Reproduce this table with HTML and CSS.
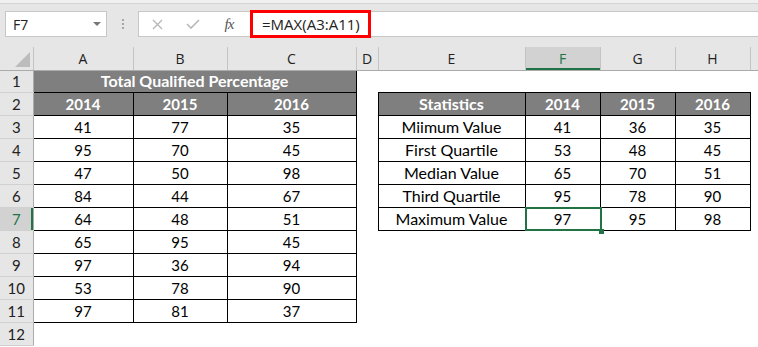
FILE: index.html
```html
<!DOCTYPE html>
<html lang="en">
<head>
    <meta charset="UTF-8">
    <meta name="viewport" content="width=device-width, initial-scale=1.0">
    <title>Quartile Statistics</title>
    <link rel="stylesheet" href="styles.css">
</head>
<body>
    <!-- Formula bar -->
    <div class="ribbon-edge"></div>
    <div class="formula-row">
        <div class="name-box">
            <span>F7</span>
            <span class="caret"></span>
        </div>
        <div class="grip"><i></i><i></i><i></i></div>
        <div class="formula-bar">
            <div class="bar-icons">
                <span class="slot">
                    <svg width="11" height="11" viewBox="0 0 11 11"><path d="M1 1 L10 10 M10 1 L1 10" stroke="#b8b8b8" stroke-width="1.4" fill="none"/></svg>
                </span>
                <span class="slot">
                    <svg width="14" height="10" viewBox="0 0 14 10"><path d="M1 5 L5 9 L13 1" stroke="#b8b8b8" stroke-width="1.6" fill="none"/></svg>
                </span>
                <span class="slot fx">fx</span>
            </div>
            <div class="formula-text">=MAX(A3:A11)</div>
        </div>
    </div>

    <!-- Worksheet -->
    <table class="sheet">
        <colgroup>
            <col class="c-head">
            <col class="c-a">
            <col class="c-b">
            <col class="c-c">
            <col class="c-d">
            <col class="c-e">
            <col class="c-f">
            <col class="c-g">
            <col class="c-h">
            <col>
        </colgroup>
        <tr class="col-letters">
            <th class="corner"><span class="tri"></span></th>
            <th>A</th><th>B</th><th>C</th><th>D</th><th>E</th>
            <th class="active-col">F</th><th>G</th><th>H</th><th class="tail"></th>
        </tr>
        <tr class="r1">
            <th class="row-num">1</th>
            <td class="b hd label" colspan="3">Total Qualified Percentage</td>
            <td></td><td></td><td></td><td></td><td></td><td></td>
        </tr>
        <tr>
            <th class="row-num">2</th>
            <td class="b hd">2014</td><td class="b hd">2015</td><td class="b hd">2016</td>
            <td></td>
            <td class="b hd label">Statistics</td><td class="b hd">2014</td><td class="b hd">2015</td><td class="b hd">2016</td>
            <td></td>
        </tr>
        <tr>
            <th class="row-num">3</th>
            <td class="b">41</td><td class="b">77</td><td class="b">35</td>
            <td></td>
            <td class="b label">Miimum Value</td><td class="b">41</td><td class="b">36</td><td class="b">35</td>
            <td></td>
        </tr>
        <tr>
            <th class="row-num">4</th>
            <td class="b">95</td><td class="b">70</td><td class="b">45</td>
            <td></td>
            <td class="b label">First Quartile</td><td class="b">53</td><td class="b">48</td><td class="b">45</td>
            <td></td>
        </tr>
        <tr>
            <th class="row-num">5</th>
            <td class="b">47</td><td class="b">50</td><td class="b">98</td>
            <td></td>
            <td class="b label">Median Value</td><td class="b">65</td><td class="b">70</td><td class="b">51</td>
            <td></td>
        </tr>
        <tr>
            <th class="row-num">6</th>
            <td class="b">84</td><td class="b">44</td><td class="b">67</td>
            <td></td>
            <td class="b label">Third Quartile</td><td class="b">95</td><td class="b">78</td><td class="b">90</td>
            <td></td>
        </tr>
        <tr>
            <th class="row-num active-row">7</th>
            <td class="b">64</td><td class="b">48</td><td class="b">51</td>
            <td></td>
            <td class="b label">Maximum Value</td><td class="b sel">97</td><td class="b">95</td><td class="b">98</td>
            <td></td>
        </tr>
        <tr>
            <th class="row-num">8</th>
            <td class="b">65</td><td class="b">95</td><td class="b">45</td>
            <td></td><td></td><td></td><td></td><td></td><td></td>
        </tr>
        <tr>
            <th class="row-num">9</th>
            <td class="b">97</td><td class="b">36</td><td class="b">94</td>
            <td></td><td></td><td></td><td></td><td></td><td></td>
        </tr>
        <tr>
            <th class="row-num">10</th>
            <td class="b">53</td><td class="b">78</td><td class="b">90</td>
            <td></td><td></td><td></td><td></td><td></td><td></td>
        </tr>
        <tr>
            <th class="row-num">11</th>
            <td class="b">97</td><td class="b">81</td><td class="b">37</td>
            <td></td><td></td><td></td><td></td><td></td><td></td>
        </tr>
        <tr>
            <th class="row-num">12</th>
            <td></td><td></td><td></td><td></td><td></td><td></td><td></td><td></td><td></td>
        </tr>
    </table>
</body>
</html>
```

FILE: styles.css
```css
/* Reset */
body, table, th, td {
    margin: 0;
    padding: 0;
}

body {
    background-color: #fff;
    font-family: Lato, "Liberation Sans", sans-serif;
    color: #000;
    overflow: hidden;
}

/* Formula bar */
.ribbon-edge {
    height: 3px;
    background-color: #f0f0f0;
    border-bottom: 1px solid #d4d4d4;
}

.formula-row {
    display: flex;
    background-color: #e6e6e6;
    padding: 7px 0 10px 5px;
}

.name-box {
    box-sizing: border-box;
    width: 102px;
    height: 26px;
    background-color: #fff;
    border: 1px solid #c6c6c6;
    display: flex;
    align-items: center;
    justify-content: space-between;
    padding: 0 5px 0 7px;
    font-family: "Open Sans", sans-serif;
    font-size: 14px;
    color: #222;
}

.caret {
    width: 0;
    height: 0;
    border-left: 4px solid transparent;
    border-right: 4px solid transparent;
    border-top: 4px solid #777;
}

.grip {
    width: 31px;
    display: flex;
    flex-direction: column;
    align-items: center;
    justify-content: center;
    gap: 2px;
}

.grip i {
    width: 2px;
    height: 2px;
    background-color: #a6a6a6;
}

.formula-bar {
    flex: 1;
    box-sizing: border-box;
    height: 26px;
    display: flex;
    background-color: #fff;
    border: 1px solid #c6c6c6;
    border-right: none;
}

.bar-icons {
    display: flex;
    width: 108px;
}

.slot {
    width: 36px;
    display: flex;
    align-items: center;
    justify-content: center;
}

.fx {
    font-family: "Liberation Serif", serif;
    font-style: italic;
    font-size: 15px;
    color: #555;
    letter-spacing: -1px;
}

.formula-text {
    box-sizing: border-box;
    height: 28px;
    margin: -2px 0 0 3px;
    padding: 0 8px 0 9px;
    border: 3px solid #f00;
    font-family: "Open Sans", sans-serif;
    font-size: 15px;
    line-height: 22px;
    color: #222;
}

/* Worksheet grid */
.sheet {
    border-collapse: collapse;
    table-layout: fixed;
    width: 758px;
}

.c-head { width: 33px; }
.c-a { width: 100px; }
.c-b { width: 94px; }
.c-c { width: 129px; }
.c-d { width: 22px; }
.c-e { width: 147px; }
.c-f { width: 75px; }
.c-g { width: 75px; }
.c-h { width: 75px; }

.sheet tr {
    height: 23px;
}

.sheet .r1 {
    height: 22px;
}

.sheet td {
    font-size: 15px;
    text-align: center;
    line-height: 20px;
    white-space: nowrap;
}

.sheet td.label {
    font-size: 16px;
}

.col-letters th {
    background-color: #e6e6e6;
    border-right: 1px solid #c4c4c4;
    border-bottom: 1px solid #ababab;
    font-family: "Open Sans", sans-serif;
    font-weight: normal;
    font-size: 14px;
    color: #222;
}

.col-letters .tail {
    border-right: none;
}

.corner {
    position: relative;
}

.tri {
    position: absolute;
    right: 3px;
    bottom: 3px;
    width: 0;
    height: 0;
    border-left: 15px solid transparent;
    border-bottom: 15px solid #bcbcbc;
}

.active-col {
    background-color: #d2d2d2 !important;
    color: #217346 !important;
    box-shadow: inset 0 -2px #217346;
}

.row-num {
    background-color: #e6e6e6;
    border-right: 1px solid #ababab;
    border-bottom: 1px solid #d0d0d0;
    font-weight: normal;
    font-size: 15px;
    color: #222;
}

.active-row {
    background-color: #d2d2d2;
    color: #217346;
    box-shadow: inset -2px 0 #217346;
}

/* Table cells */
.b {
    border: 1px solid #000;
}

.hd {
    background-color: #7f7f7f;
    color: #fff;
    font-weight: bold;
}

.sel {
    position: relative;
}

.sel::after {
    content: "";
    position: absolute;
    left: -1px;
    top: -1px;
    right: -2px;
    bottom: -1px;
    border: 2px solid #217346;
}

.sel::before {
    content: "";
    position: absolute;
    right: -4px;
    bottom: -4px;
    width: 5px;
    height: 5px;
    background-color: #217346;
    z-index: 1;
}
```
